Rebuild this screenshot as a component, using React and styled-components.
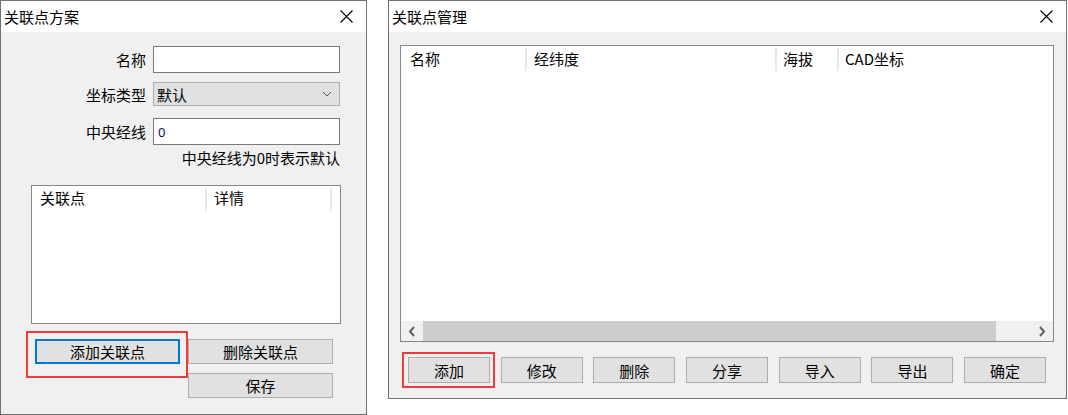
import styled, { createGlobalStyle, css } from 'styled-components';

const GlobalStyle = createGlobalStyle`
  html, body {
    margin: 0;
    padding: 0;
    background: #fff;
  }
  body {
    font-family: "Microsoft YaHei", "Noto Sans CJK SC", "Noto Sans", sans-serif;
    font-size: 15px;
    color: #000;
  }
  * {
    box-sizing: border-box;
  }
`;

// -------------------------------------------------- styling ----------------------------------------------
const Screen = styled.div`
  display: flex;
  align-items: flex-start;
  gap: 21px;
  width: 1068px;
  height: 415px;
  overflow: hidden;
`;

const WindowFrame = styled.div`
  display: flex;
  flex-direction: column;
  width: ${({ $width }) => $width}px;
  height: ${({ $height }) => $height}px;
  border: 1px solid #707070;
  background: #f0f0f0;
`;

const TitleBar = styled.div`
  display: flex;
  align-items: center;
  justify-content: space-between;
  height: 31px;
  flex-shrink: 0;
  padding: 0 13px 0 3px;
  background: #fff;
  font-size: 15px;
  line-height: 1;
`;

const CloseBtn = styled.div`
  display: flex;
  align-items: center;
`;

const Body = styled.div`
  flex: 1;
  display: flex;
  flex-direction: column;
`;

const FormRow = styled.div`
  display: grid;
  grid-template-columns: 145px 187px;
  column-gap: 7px;
  align-items: center;
  margin-top: ${({ $mt }) => $mt}px;
`;

const Label = styled.div`
  text-align: right;
  font-size: 15px;
`;

const TextInput = styled.div`
  display: flex;
  align-items: center;
  height: 27px;
  padding-left: 4px;
  border: 1px solid #7a7a7a;
  background: #fff;
`;

const InputValue = styled.span`
  font-family: "Segoe UI", "Noto Sans", sans-serif;
  font-size: 13px;
  color: #101060;
`;

const Combo = styled.div`
  display: flex;
  align-items: center;
  justify-content: space-between;
  height: 24px;
  padding: 0 7px 0 3px;
  border: 1px solid #adadad;
  background: #e1e1e1;
  font-size: 15px;
`;

const Hint = styled.div`
  margin-top: 3px;
  padding-right: 26px;
  text-align: right;
  font-size: 15px;
  line-height: 20px;
`;

const ListBox = styled.div`
  display: flex;
  flex-direction: column;
  width: ${({ $width }) => $width}px;
  height: ${({ $height }) => $height}px;
  margin: ${({ $mt }) => $mt}px 0 0 ${({ $ml }) => $ml}px;
  border: 1px solid #828790;
  background: #fff;
  flex-shrink: 0;
`;

const ListHeader = styled.div`
  display: flex;
  height: 25px;
  flex-shrink: 0;
`;

const HeaderCell = styled.div`
  ${({ $width }) =>
    $width
      ? css`
          width: ${$width}px;
        `
      : css`
          flex: 1;
        `}
  height: 23px;
  margin-top: 2px;
  padding-left: ${({ $pl }) => $pl}px;
  border-right: ${({ $last }) => ($last ? 'none' : '2px solid #e8e8e8')};
  font-size: 15px;
  line-height: ${({ $lh }) => $lh || 21}px;
  white-space: nowrap;
`;

const ListFill = styled.div`
  flex: 1;
`;

const ScrollBar = styled.div`
  display: flex;
  height: 20px;
  background: #f0f0f0;
  flex-shrink: 0;
`;

const ScrollArrow = styled.div`
  display: flex;
  align-items: center;
  justify-content: center;
  width: 22px;
`;

const ScrollThumb = styled.div`
  width: 573px;
  background: #cdcdcd;
`;

const ScrollTrack = styled.div`
  flex: 1;
`;

const Button = styled.div`
  display: flex;
  align-items: center;
  justify-content: center;
  height: ${({ $h }) => $h || 26}px;
  border: ${({ $focused }) => ($focused ? '2px solid #0078d7' : '1px solid #adadad')};
  background: #e1e1e1;
  font-size: 15px;
`;

const Highlight = styled.div`
  position: relative;

  &::after {
    content: '';
    position: absolute;
    top: -${({ $t }) => $t}px;
    left: -${({ $l }) => $l}px;
    right: -${({ $r }) => $r}px;
    bottom: -${({ $b }) => $b}px;
    border: 2px solid #f23a3a;
    pointer-events: none;
  }
`;

const SchemeButtons = styled.div`
  display: grid;
  grid-template-columns: 145px 145px;
  column-gap: 8px;
  row-gap: 9px;
  margin: 15px 0 0 34px;
`;

const ManageButtons = styled.div`
  display: grid;
  grid-template-columns: repeat(7, 82px);
  column-gap: 10.7px;
  margin: 15px 0 0 19px;
`;

// -------------------------------------------------- components ----------------------------------------------
function CloseIcon() {
  return (
    <svg width="13" height="13" viewBox="0 0 13 13">
      <path d="M0.5 0.5 L12.5 12.5 M12.5 0.5 L0.5 12.5" stroke="#000" strokeWidth="1.1" fill="none" />
    </svg>
  );
}

function Chevron({ dir }) {
  const d = {
    down: 'M1 1 L5 5 L9 1',
    left: 'M6 1 L2 5.5 L6 10',
    right: 'M2 1 L6 5.5 L2 10',
  }[dir];
  const small = dir === 'down';
  return (
    <svg width={small ? 10 : 8} height={small ? 6 : 11} viewBox={small ? '0 0 10 6' : '0 0 8 11'}>
      <path d={d} stroke={small ? '#555' : '#606060'} strokeWidth={small ? 1 : 2} fill="none" />
    </svg>
  );
}

function Window({ title, width, height, children }) {
  return (
    <WindowFrame $width={width} $height={height}>
      <TitleBar>
        <span>{title}</span>
        <CloseBtn>
          <CloseIcon />
        </CloseBtn>
      </TitleBar>
      <Body>{children}</Body>
    </WindowFrame>
  );
}

function SchemeDialog() {
  return (
    <Window title="关联点方案" width={367} height={415}>
      <FormRow $mt={14}>
        <Label>名称</Label>
        <TextInput />
      </FormRow>
      <FormRow $mt={9}>
        <Label>坐标类型</Label>
        <Combo>
          <span>默认</span>
          <Chevron dir="down" />
        </Combo>
      </FormRow>
      <FormRow $mt={12}>
        <Label>中央经线</Label>
        <TextInput>
          <InputValue>0</InputValue>
        </TextInput>
      </FormRow>
      <Hint>中央经线为0时表示默认</Hint>

      <ListBox $width={310} $height={139} $ml={30} $mt={17}>
        <ListHeader>
          <HeaderCell $width={175} $pl={8} $lh={19}>关联点</HeaderCell>
          <HeaderCell $width={125} $pl={7} $lh={19}>详情</HeaderCell>
        </ListHeader>
      </ListBox>

      <SchemeButtons>
        <Highlight $t={8} $l={9} $r={8} $b={14}>
          <Button $focused $h={25}>添加关联点</Button>
        </Highlight>
        <Button $h={25}>删除关联点</Button>
        <span />
        <Button $h={25}>保存</Button>
      </SchemeButtons>
    </Window>
  );
}

const manageButtons = ['修改', '删除', '分享', '导入', '导出', '确定'];

function ManageDialog() {
  return (
    <Window title="关联点管理" width={679} height={399}>
      <ListBox $width={654} $height={297} $ml={11} $mt={13}>
        <ListHeader>
          <HeaderCell $width={126} $pl={9}>名称</HeaderCell>
          <HeaderCell $width={250} $pl={7}>经纬度</HeaderCell>
          <HeaderCell $width={62} $pl={6}>海拔</HeaderCell>
          <HeaderCell $pl={6} $last>CAD坐标</HeaderCell>
        </ListHeader>
        <ListFill />
        <ScrollBar>
          <ScrollArrow>
            <Chevron dir="left" />
          </ScrollArrow>
          <ScrollThumb />
          <ScrollTrack />
          <ScrollArrow>
            <Chevron dir="right" />
          </ScrollArrow>
        </ScrollBar>
      </ListBox>

      <ManageButtons>
        <Highlight $t={5} $l={6} $r={5} $b={5}>
          <Button>添加</Button>
        </Highlight>
        {manageButtons.map((label) => (
          <Button key={label}>{label}</Button>
        ))}
      </ManageButtons>
    </Window>
  );
}

export default function App() {
  return (
    <>
      <GlobalStyle />
      <Screen>
        <SchemeDialog />
        <ManageDialog />
      </Screen>
    </>
  );
}
